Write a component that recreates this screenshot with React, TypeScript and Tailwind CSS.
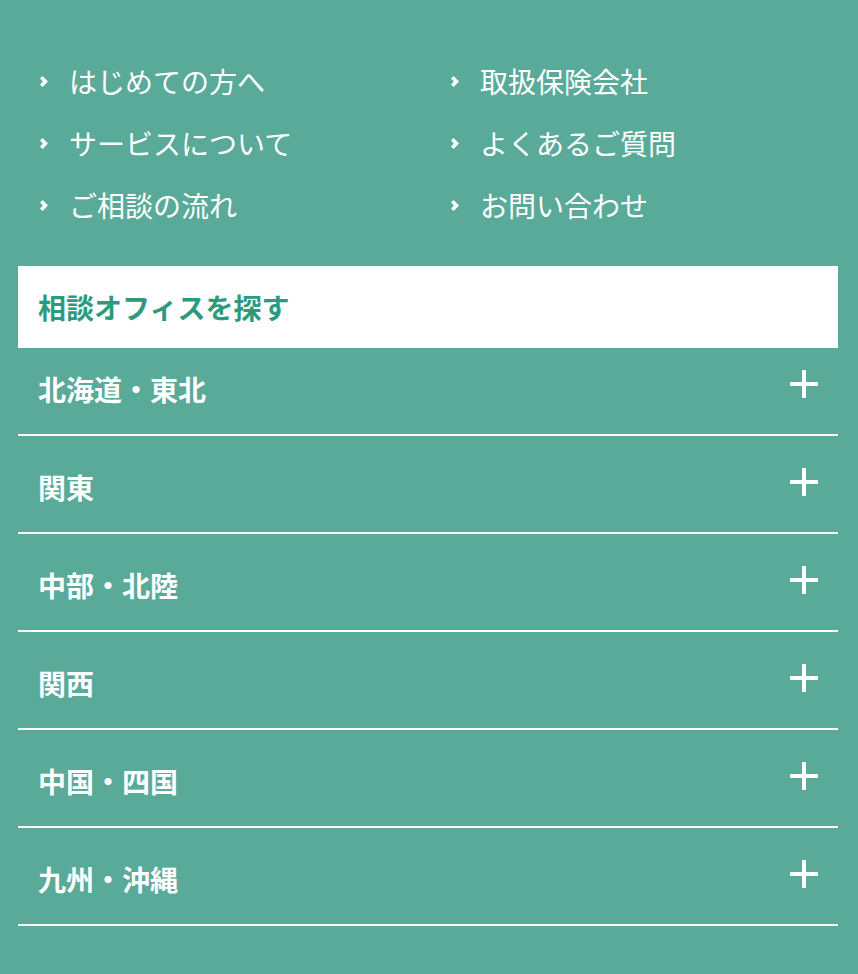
import React from 'react';

const links = [
  ['はじめての方へ', '取扱保険会社'],
  ['サービスについて', 'よくあるご質問'],
  ['ご相談の流れ', 'お問い合わせ'],
];

const regions = ['北海道・東北', '関東', '中部・北陸', '関西', '中国・四国', '九州・沖縄'];

const font = { fontFamily: '"Noto Sans CJK JP", "Noto Sans", sans-serif' };

const Chevron: React.FC = () => (
  <svg width="8" height="11" viewBox="0 0 8 11" className="shrink-0">
    <polygon points="0,2.6 2.6,0 8,5.5 2.6,11 0,8.4 2.9,5.5" fill="white" />
  </svg>
);

const Plus: React.FC = () => (
  <svg width="28" height="28" viewBox="0 0 28 28" className="shrink-0">
    <rect x="0" y="12" width="28" height="4" fill="white" />
    <rect x="12" y="0" width="4" height="28" fill="white" />
  </svg>
);

const LinkItem: React.FC<{ label: string }> = ({ label }) => (
  <a href="#" className="flex h-[62px] items-center text-white">
    <span className="flex w-[30px] items-center pl-[1px]">
      <Chevron />
    </span>
    <span className="text-[28px] leading-none font-normal">{label}</span>
  </a>
);

export default function App() {
  return (
    <div className="min-h-[974px] w-full bg-[#5aaa99] pl-[18px] pr-[20px] pt-[50px] pb-[49px]" style={font}>
      {/* site links */}
      <div className="grid grid-cols-[411px_1fr] pl-[21px]">
        {links.map(([l, r]) => (
          <React.Fragment key={l}>
            <LinkItem label={l} />
            <LinkItem label={r} />
          </React.Fragment>
        ))}
      </div>

      {/* office search */}
      <div className="mt-[30px] flex h-[82px] items-center bg-white px-[20px]">
        <h2 className="text-[28px] leading-none font-bold text-[#2c9a7f]">相談オフィスを探す</h2>
      </div>

      <ul>
        {regions.map((r, i) => (
          <li
            key={r}
            className={`flex justify-between border-b-2 border-white pl-[20px] pr-[20px] ${
              i === 0 ? 'h-[88px] pt-[22px]' : 'h-[98px] pt-[32px]'
            }`}
          >
            <span className="pt-[4px] text-[28px] leading-[30px] font-bold text-white">{r}</span>
            <Plus />
          </li>
        ))}
      </ul>
    </div>
  );
}
